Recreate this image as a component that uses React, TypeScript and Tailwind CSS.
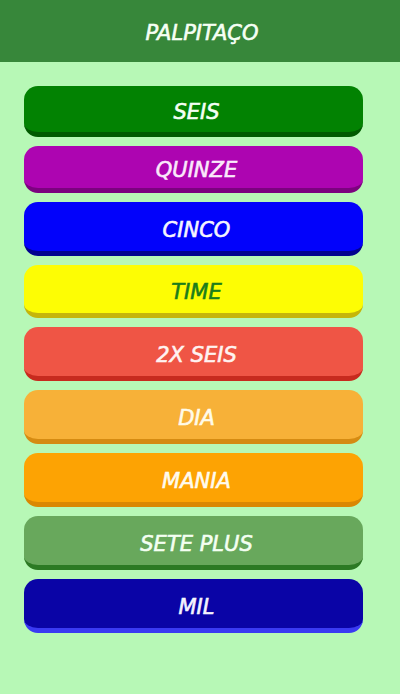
import React from 'react';

type Game = {
    label: string;
    face: string;
    edge: string;
    text: string;
    height: string;
};

const GAMES: Game[] = [
    { label: 'SEIS', face: 'bg-[#028202]', edge: 'border-[#015a01]', text: 'text-[#f4fff4]', height: 'h-[51px]' },
    { label: 'QUINZE', face: 'bg-[#ad05b1]', edge: 'border-[#7c037f]', text: 'text-[#fbe9fb]', height: 'h-[47px]' },
    { label: 'CINCO', face: 'bg-[#0202fb]', edge: 'border-[#02028e]', text: 'text-[#f5f5ff]', height: 'h-[54px]' },
    { label: 'TIME', face: 'bg-[#fdfd04]', edge: 'border-[#c5b50a]', text: 'text-[#1b7d1b]', height: 'h-[53px]' },
    { label: '2X SEIS', face: 'bg-[#ef5545]', edge: 'border-[#c72a1e]', text: 'text-[#fff3f1]', height: 'h-[54px]' },
    { label: 'DIA', face: 'bg-[#f7b138]', edge: 'border-[#d58b12]', text: 'text-[#fffbe9]', height: 'h-[54px]' },
    { label: 'MANIA', face: 'bg-[#fda303]', edge: 'border-[#da8702]', text: 'text-[#fffbee]', height: 'h-[54px]' },
    { label: 'SETE PLUS', face: 'bg-[#68a85c]', edge: 'border-[#2c7a24]', text: 'text-[#f4fff2]', height: 'h-[54px]' },
    { label: 'MIL', face: 'bg-[#0a04a6]', edge: 'border-[#3a3af2]', text: 'text-[#f4f4ff]', height: 'h-[54px]' },
];

const GameButton: React.FC<{ game: Game }> = ({ game }) => (
    <button
        type="button"
        className={`${game.face} ${game.edge} ${game.text} ${game.height} flex w-full items-center justify-center rounded-[14px] border-b-[5px] pt-[8px] pl-[6px] text-[21px] italic [-webkit-text-stroke:0.6px_currentColor]`}
    >
        {game.label}
    </button>
);

export default function App() {
    return (
        <div className="flex min-h-[694px] w-full flex-col bg-[#b7f8b6] font-['DejaVu_Sans',sans-serif]">
            <header className="flex h-[62px] items-center justify-center bg-[#37873a] pt-[6px] pl-[4px]">
                <h1 className="text-[21px] italic text-[#f6fff4] [-webkit-text-stroke:0.6px_currentColor]">PALPITAÇO</h1>
            </header>
            <div className="flex flex-col gap-[9px] pl-[24px] pr-[37px] pt-[24px]">
                {GAMES.map(g => (
                    <GameButton key={g.label} game={g} />
                ))}
            </div>
        </div>
    );
}
